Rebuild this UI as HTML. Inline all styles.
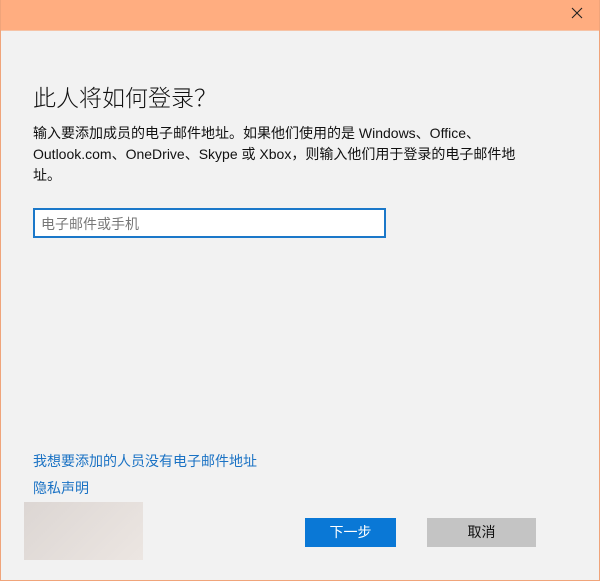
<!DOCTYPE html>
<html><head><meta charset="utf-8"><style>
*{margin:0;padding:0;box-sizing:border-box}
body{width:600px;height:581px;background:#f2f2f2;font-family:"Liberation Sans","Noto Sans CJK SC",sans-serif;position:relative;overflow:hidden}
.frame{position:absolute;left:0;top:0;width:600px;height:581px;border:1px solid #f0a47a;border-top:none}
.title{position:absolute;left:0;top:0;width:600px;height:31px;background:#ffad80;border-bottom:1px solid #f6c3a6}
.x{position:absolute;left:571px;top:7px;width:12px;height:12px}
.h{position:absolute;left:33px;top:79px;font-size:23px;color:#111;font-weight:300}
.p{position:absolute;left:33px;top:123px;font-size:14px;line-height:21px;color:#111;white-space:nowrap}
.in{position:absolute;left:33px;top:208px;width:353px;height:30px;border:2px solid #1b78c9;background:#fff;font-size:14px;color:#777;padding:4px 0 0 6px}
.l{position:absolute;left:33px;font-size:14px;color:#1a72c4}
.patch{position:absolute;left:24px;top:502px;width:119px;height:58px;background:linear-gradient(135deg,#dcd6d3,#ece6e2)}
.b{position:absolute;top:518px;height:29px;font-size:14px;text-align:center;line-height:29px}
</style></head><body>
<div class="title"><svg class="x" viewBox="0 0 12 12"><path d="M1 1L11 11M11 1L1 11" stroke="#222" stroke-width="1.1"/></svg></div>
<div class="h">此人将如何登录？</div>
<div class="p">输入要添加成员的电子邮件地址。如果他们使用的是 Windows、Office、<br>Outlook.com、OneDrive、Skype 或 Xbox，则输入他们用于登录的电子邮件地<br>址。</div>
<div class="in">电子邮件或手机</div>
<div class="l" style="top:451px">我想要添加的人员没有电子邮件地址</div>
<div class="l" style="top:478px">隐私声明</div>
<div class="patch"></div>
<div class="b" style="left:305px;width:91px;background:#0a78d6;color:#fff">下一步</div>
<div class="b" style="left:427px;width:109px;background:#c4c4c4;color:#111">取消</div>
<div class="frame"></div>
</body></html>
